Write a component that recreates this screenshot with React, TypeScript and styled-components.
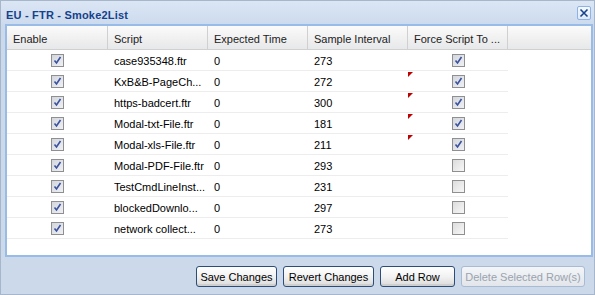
import React from "react";
import styled, { createGlobalStyle } from "styled-components";

const GlobalStyle = createGlobalStyle`
  html, body {
    margin: 0;
    padding: 0;
    background: #ffffff;
  }
  * {
    box-sizing: border-box;
  }
`;

const Window = styled.div`
  width: 595px;
  height: 295px;
  border: 1px solid #a7b6ca;
  background: #cbd9eb;
  display: flex;
  flex-direction: column;
  font-family: Tahoma, "Liberation Sans", Arial, sans-serif;
`;

const TitleBar = styled.div`
  height: 23px;
  display: flex;
  align-items: center;
  justify-content: space-between;
  padding: 4px 3px 0 5px;
  background: linear-gradient(#dbe6f4, #cddbee);
`;

const Title = styled.span`
  font-size: 11px;
  font-weight: bold;
  color: #15428b;
  letter-spacing: 0.2px;
`;

const CloseButton = styled.div`
  width: 14px;
  height: 14px;
  border: 1px solid #8db2e3;
  border-radius: 2px;
  background: linear-gradient(#f4f8fd, #dfe9f7);
  display: flex;
  align-items: center;
  justify-content: center;
  margin-top: -3px;
`;

const GridPanel = styled.div`
  margin: 0 1px 0 4px;
  height: 233px;
  border: 2px solid #99bbe8;
  background: #ffffff;
  display: flex;
  flex-direction: column;
  overflow: hidden;
`;

const HeaderRow = styled.div`
  display: grid;
  grid-template-columns: 101px 100px 100px 100px 100px 1fr;
  height: 24px;
  border-bottom: 1px solid #d0d0d0;
  background: linear-gradient(#fbfbfb, #f1f1f1 50%, #e7e8ea);
`;

const HeaderCell = styled.div<{ $last?: boolean }>`
  display: flex;
  align-items: center;
  padding: 2px 0 0 6px;
  font-size: 11px;
  color: #222;
  white-space: nowrap;
  overflow: hidden;
  border-right: ${(p) => (p.$last ? "none" : "1px solid #d0d0d0")};
`;

const Row = styled.div`
  display: grid;
  grid-template-columns: 101px 100px 100px 100px 100px;
  width: 501px;
  height: 21px;
  border-bottom: 1px solid #ededed;
`;

const Cell = styled.div<{ $center?: boolean; $dirty?: boolean }>`
  position: relative;
  display: flex;
  align-items: center;
  justify-content: ${(p) => (p.$center ? "center" : "flex-start")};
  padding: ${(p) => (p.$center ? "0" : "1px 0 0 6px")};
  font-size: 11px;
  color: #000;
  white-space: nowrap;
  overflow: hidden;

  ${(p) =>
    p.$dirty &&
    `
    &::before {
      content: "";
      position: absolute;
      left: 0;
      top: 1px;
      width: 0;
      height: 0;
      border-top: 5px solid #c00000;
      border-right: 5px solid transparent;
    }
  `}
`;

const Box = styled.div<{ $checked: boolean }>`
  width: 13px;
  height: 13px;
  border: 1px solid #8f8f8f;
  background: ${(p) =>
    p.$checked
      ? "linear-gradient(135deg, #d3d6dc, #eef0f4)"
      : "linear-gradient(135deg, #dcdcdc, #f7f7f7)"};
  display: flex;
  align-items: center;
  justify-content: center;
`;

const Toolbar = styled.div`
  flex: 1;
  display: flex;
  justify-content: flex-end;
  align-items: flex-start;
  gap: 6px;
  padding: 9px 9px 0 0;
`;

const Button = styled.button<{ $width: number }>`
  width: ${(p) => p.$width}px;
  height: 21px;
  padding: 0;
  border: 1px solid ${(p) => (p.disabled ? "#a9bbd3" : "#2b4d78")};
  border-radius: 3px;
  background: ${(p) =>
    p.disabled
      ? "linear-gradient(#f3f5f8, #e2e6eb)"
      : "linear-gradient(#ffffff, #f2f2f2 50%, #dadada)"};
  color: ${(p) => (p.disabled ? "#9aa3ae" : "#000")};
  font-family: Tahoma, "Liberation Sans", Arial, sans-serif;
  font-size: 11px;
  box-shadow: ${(p) => (p.disabled ? "none" : "inset 0 -2px 0 #cfcfcf")};
`;

const Check = ({ checked }: { checked: boolean }) => (
  <Box $checked={checked}>
    {checked && (
      <svg width="9" height="9" viewBox="0 0 9 9">
        <path d="M1.5 4.5 L3.5 7 L7.5 1" stroke="#3a51a0" strokeWidth="1.6" fill="none" />
      </svg>
    )}
  </Box>
);

interface Item {
  script: string;
  expected: string;
  interval: string;
  force: boolean;
  dirty?: boolean;
}

const rows: Item[] = [
  { script: "case935348.ftr", expected: "0", interval: "273", force: true },
  { script: "KxB&B-PageCh...", expected: "0", interval: "272", force: true, dirty: true },
  { script: "https-badcert.ftr", expected: "0", interval: "300", force: true, dirty: true },
  { script: "Modal-txt-File.ftr", expected: "0", interval: "181", force: true, dirty: true },
  { script: "Modal-xls-File.ftr", expected: "0", interval: "211", force: true, dirty: true },
  { script: "Modal-PDF-File.ftr", expected: "0", interval: "293", force: false },
  { script: "TestCmdLineInst...", expected: "0", interval: "231", force: false },
  { script: "blockedDownlo...", expected: "0", interval: "297", force: false },
  { script: "network collect...", expected: "0", interval: "273", force: false },
];

export default function App() {
  return (
    <>
      <GlobalStyle />
      <Window>
        <TitleBar>
          <Title>EU - FTR - Smoke2List</Title>
          <CloseButton>
            <svg width="10" height="10" viewBox="0 0 10 10">
              <path d="M1.5 1.5 L8.5 8.5 M8.5 1.5 L1.5 8.5" stroke="#15428b" strokeWidth="1.6" />
            </svg>
          </CloseButton>
        </TitleBar>
        <GridPanel>
          <HeaderRow>
            <HeaderCell>Enable</HeaderCell>
            <HeaderCell>Script</HeaderCell>
            <HeaderCell>Expected Time</HeaderCell>
            <HeaderCell>Sample Interval</HeaderCell>
            <HeaderCell>Force Script To ...</HeaderCell>
            <HeaderCell $last />
          </HeaderRow>
          {rows.map((r, i) => (
            <Row key={i}>
              <Cell $center>
                <Check checked />
              </Cell>
              <Cell>{r.script}</Cell>
              <Cell>{r.expected}</Cell>
              <Cell>{r.interval}</Cell>
              <Cell $center $dirty={r.dirty}>
                <Check checked={r.force} />
              </Cell>
            </Row>
          ))}
        </GridPanel>
        <Toolbar>
          <Button $width={81}>Save Changes</Button>
          <Button $width={91}>Revert Changes</Button>
          <Button $width={75}>Add Row</Button>
          <Button $width={124} disabled>
            Delete Selected Row(s)
          </Button>
        </Toolbar>
      </Window>
    </>
  );
}
